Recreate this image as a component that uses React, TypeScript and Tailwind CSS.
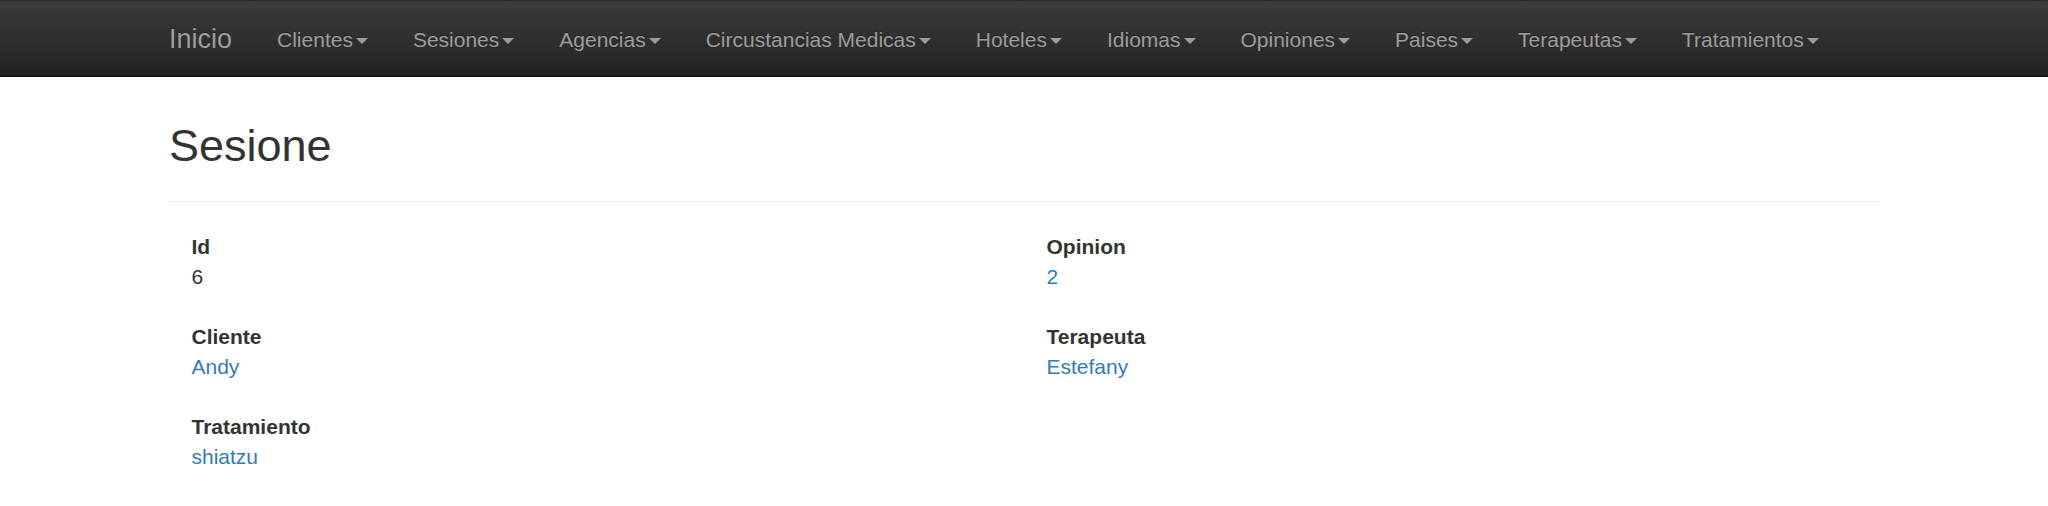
import React from "react";

const navItems = [
  "Clientes",
  "Sesiones",
  "Agencias",
  "Circustancias Medicas",
  "Hoteles",
  "Idiomas",
  "Opiniones",
  "Paises",
  "Terapeutas",
  "Tratamientos",
];

function Caret() {
  return (
    <span className="inline-block w-0 h-0 ml-[3px] align-middle border-t-[6px] border-t-[#9d9d9d] border-x-[6px] border-x-transparent" />
  );
}

function Field({ label, value, link }: { label: string; value: string; link?: boolean }) {
  return (
    <dl className="mb-[30px] text-[21px] leading-[30px]">
      <dt className="font-bold text-[#333]">{label}</dt>
      <dd className={link ? "text-[#337ab7]" : "text-[#333]"}>
        {link ? <a className="text-[#337ab7]">{value}</a> : value}
      </dd>
    </dl>
  );
}

export default function App() {
  return (
    <div className="min-h-[506px] bg-white font-['Liberation_Sans',Arial,Helvetica,sans-serif] text-[#333]">
      <nav className="border-t border-t-[#1e2835] border-b-[1.5px] border-b-[#080808] bg-[linear-gradient(to_bottom,#3c3c3c_0%,#222_100%)]">
        <div className="mx-auto w-[1755px] px-[22.5px]">
          <div className="flex -ml-[22.5px] h-[75px]">
            <a className="block px-[22.5px] py-[22.5px] text-[27px] leading-[30px] text-[#9d9d9d] [text-shadow:0_-1.5px_0_rgba(0,0,0,0.25)]">
              Inicio
            </a>
            <ul className="flex">
              {navItems.map((n) => (
                <li key={n}>
                  <a className="block px-[22.5px] pt-[23.5px] pb-[21.5px] text-[21px] leading-[30px] text-[#9d9d9d] whitespace-nowrap [text-shadow:0_-1.5px_0_rgba(0,0,0,0.25)]">
                    {n}
                    <Caret />
                  </a>
                </li>
              ))}
            </ul>
          </div>
        </div>
      </nav>
      <main className="mx-auto w-[1755px] px-[22.5px]">
        <div className="mt-[44px] mb-[30px] pb-[30px] border-b-[1.5px] border-b-[#eeeeee]">
          <h2 className="text-[45px] leading-[1.1] font-normal text-[#333]">Sesione</h2>
        </div>
        <div className="grid grid-cols-2 -mx-[22.5px]">
          <div className="pl-[45px] pr-[22.5px]">
            <Field label="Id" value="6" />
            <Field label="Cliente" value="Andy" link />
            <Field label="Tratamiento" value="shiatzu" link />
          </div>
          <div className="px-[22.5px]">
            <Field label="Opinion" value="2" link />
            <Field label="Terapeuta" value="Estefany" link />
          </div>
        </div>
      </main>
    </div>
  );
}
